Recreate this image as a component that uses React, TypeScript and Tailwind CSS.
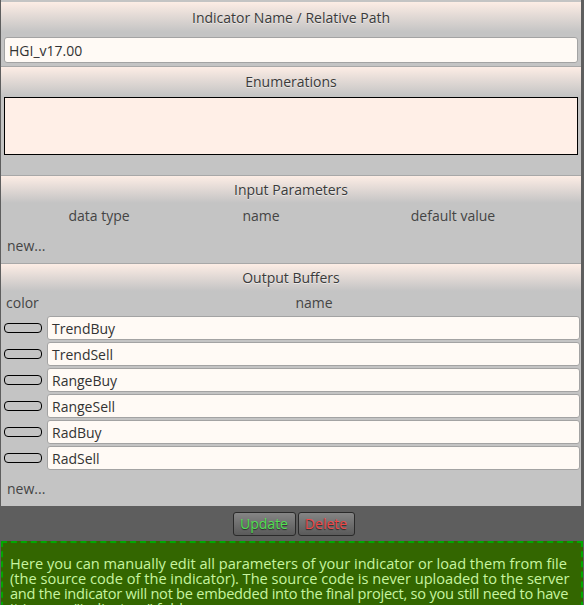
import React from "react";

const font = { fontFamily: '"Open Sans", "Noto Sans", Arial, sans-serif' };

function SectionHeader({ title, border = true, tall = false }: { title: string; border?: boolean; tall?: boolean }) {
  return (
    <div
      className={`flex items-center justify-center bg-gradient-to-b from-[#fdede5] to-[#c4c4c4] text-[14px] text-[#3a3a3a] [text-shadow:0_1px_0_rgba(255,255,255,0.5)] ${
        tall ? "h-[30px]" : "h-[28px]"
      } ${border ? "border-t border-[#a8a8a8]" : ""}`}
    >
      {title}
    </div>
  );
}

const buffers = ["TrendBuy", "TrendSell", "RangeBuy", "RangeSell", "RadBuy", "RadSell"];

const helpLines = [
  { text: "Here you can manually edit all parameters of your indicator or load them from file", cls: "" },
  { text: "(the source code of the indicator). The source code is never uploaded to the server", cls: "" },
  {
    text: "and the indicator will not be embedded into the final project, so you still need to have",
    cls: "tracking-[-0.25px]",
  },
  { text: 'it in your "indicators" folder.', cls: "" },
];

export default function App() {
  return (
    <div className="h-[605px] w-[584px] overflow-hidden bg-[#5e5e5e] text-[14px]" style={font}>
      <div className="ml-px w-[580px] bg-[#c4c4c4] pt-[2px]">
        {/* indicator name */}
        <div className="bg-[#5e5e5e]">
          <SectionHeader title="Indicator Name / Relative Path" border={false} tall />
        </div>
        <div className="px-[3px] pb-[3px] pt-[5px]">
          <div className="flex h-[26px] items-center rounded-[3px] border border-[#a3a3a3] bg-[#fffaf5] px-[4px] text-[#333]">
            HGI_v17.00
          </div>
        </div>

        {/* enumerations */}
        <SectionHeader title="Enumerations" tall />
        <div className="px-[3px] pb-[20px] pt-px">
          <div className="h-[58px] border border-black bg-[#ffefe7]" />
        </div>

        {/* input parameters */}
        <SectionHeader title="Input Parameters" />
        <div className="grid h-[24px] grid-cols-[196px_128px_1fr] items-center text-[#444]">
          <span className="text-center">data type</span>
          <span className="text-center">name</span>
          <span className="text-center">default value</span>
        </div>
        <div className="flex h-[34px] items-center px-[6px] pt-[2px] text-[#444]">new...</div>

        {/* output buffers */}
        <div className="pt-[2px]">
          <SectionHeader title="Output Buffers" />
        </div>
        <div className="flex h-[22px] items-center text-[#444]">
          <span className="w-[46px] pl-[5px]">color</span>
          <span className="flex-1 text-center">name</span>
        </div>
        <div className="flex flex-col gap-[2px] pt-[3px]">
          {buffers.map((b) => (
            <div key={b} className="flex h-[24px] items-center pr-px">
              <div className="ml-[3px] mr-[5px] h-[10px] w-[38px] rounded-[4px] border-[1.5px] border-black bg-[#c4c4c4]" />
              <div className="flex h-[24px] flex-1 items-center rounded-[3px] border border-[#a3a3a3] bg-[#fffaf5] px-[4px] text-[#333]">
                {b}
              </div>
            </div>
          ))}
        </div>
        <div className="flex h-[36px] items-center px-[6px] text-[#444]">new...</div>
      </div>

      {/* actions */}
      <div className="flex h-[35px] items-center justify-center gap-[2px] pl-[3px]">
        <button className="h-[24px] w-[63px] rounded-[3px] border border-[#2a2a2a] bg-gradient-to-b from-[#858585] to-[#5a5a5a] text-[14px] text-[#52e052] [text-shadow:0_1px_1px_rgba(0,0,0,0.6)]">
          Update
        </button>
        <button className="h-[24px] w-[57px] rounded-[3px] border border-[#2a2a2a] bg-gradient-to-b from-[#858585] to-[#5a5a5a] text-[14px] text-[#ee4646] [text-shadow:0_1px_1px_rgba(0,0,0,0.6)]">
          Delete
        </button>
      </div>

      {/* help note */}
      <div className="ml-px mr-px border-2 border-dashed border-[#00a800] bg-[#336600] px-[7px] pt-[13px] text-[14.6px] leading-[15px] text-[#c8f5a0]">
        {helpLines.map((line) => (
          <div key={line.text} className={`whitespace-nowrap ${line.cls}`}>
            {line.text}
          </div>
        ))}
      </div>
    </div>
  );
}
